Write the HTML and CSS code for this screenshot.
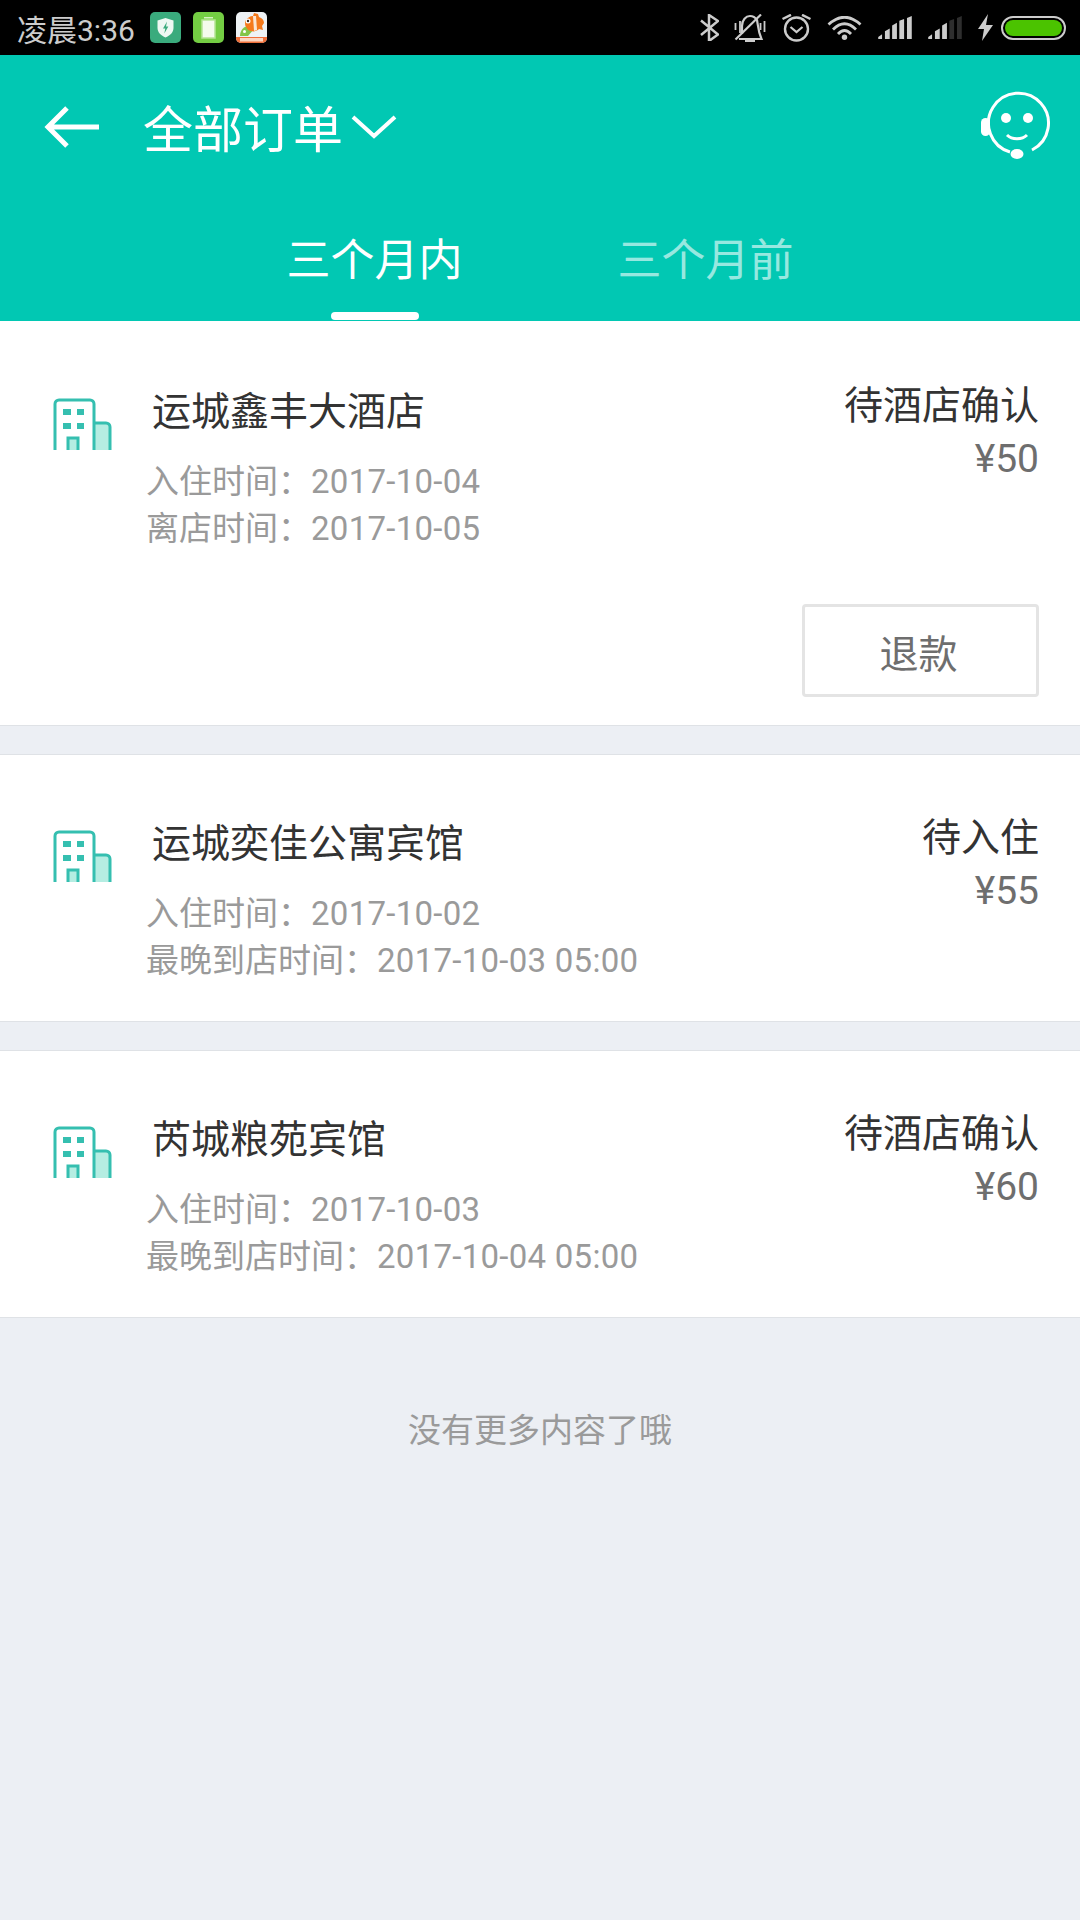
FILE: index.html
```html
<!DOCTYPE html>
<html lang="zh-CN">
<head>
    <meta charset="UTF-8">
    <meta name="viewport" content="width=device-width, initial-scale=1.0">
    <title>全部订单</title>
    <link rel="stylesheet" href="styles.css">
</head>
<body>

<div class="status-bar">
    <div class="status-left">
        <span class="status-time">凌晨3:36</span>
        <svg class="app-icon" viewBox="0 0 31 31">
            <rect width="31" height="31" rx="5" fill="#3aab7d"/>
            <path d="M15.500 6l8 2.500v7.500c0 4.500-3.500 7.500-8 9.500-4.500-2-8-5-8-9.500V8.500z" fill="#eef8f3"/>
            <path d="M17 9.500l-4 7h2.300l-1 5 4-7H16z" fill="#3aab7d"/>
        </svg>
        <svg class="app-icon" viewBox="0 0 31 31">
            <rect width="31" height="31" rx="5" fill="#74cd43"/>
            <rect x="11" y="5" width="9" height="1.500" fill="#d6f0c2"/>
            <rect x="9" y="8" width="13" height="18" fill="#f4fbec" stroke="#b5e595" stroke-width="1.500"/>
        </svg>
        <svg class="app-icon" viewBox="0 0 31 31">
            <rect width="31" height="31" rx="5" fill="#eef2f5"/>
            <path d="M4 24c0-6 4-10 9-10l5 3-6 7z" fill="#83c548"/>
            <circle cx="8.500" cy="19.500" r="1.500" fill="#fff"/>
            <path d="M9 9c2-3 5-5 8-5l1-3 4 1 1 3c3 1 5 3 5 6l-2 3 1 4-4-1c-2 2-5 3-8 2-2 0-4-2-5-4-1-1-1-4-1-6z" fill="#f57a1c"/>
            <path d="M17 4l3 0 1 14-3 1z" fill="#fbe6d3"/>
            <circle cx="12" cy="9" r="2.500" fill="#fff"/>
            <circle cx="12" cy="9" r="1.200" fill="#3a2a20"/>
            <path d="M0 25h31v1a5 5 0 0 1-5 5H5a5 5 0 0 1-5-5z" fill="#f0703a"/>
            <rect x="4" y="26" width="23" height="3.500" fill="#fbd6c2"/>
        </svg>
    </div>
    <div class="status-right">
        <svg class="ico-bt" viewBox="0 0 19 27">
            <path d="M1 6.500l17 14-9 6.500V1l9 6-17 14" fill="none" stroke="#ccc" stroke-width="2.500"/>
        </svg>
        <svg class="ico-bell" viewBox="0 0 32 28">
            <path d="M8 20v-8c0-6 4-10 8-10 3 0 5 1 7 4 1 5 1 11 4.500 19H5" fill="none" stroke="#ccc" stroke-width="2.200"/>
            <path d="M11 27h10" stroke="#ccc" stroke-width="2"/>
            <path d="M1.500 9v7M6 7v12M26.500 9v7M30.500 7v11" stroke="#ccc" stroke-width="1.800"/>
            <path d="M27 .5L1.500 25.500" stroke="#ccc" stroke-width="2.200"/>
        </svg>
        <svg class="ico-alarm" viewBox="0 0 29 28">
            <circle cx="14.500" cy="15" r="11.500" fill="none" stroke="#ccc" stroke-width="2.400"/>
            <path d="M8.500 13l6 5 6-5" fill="none" stroke="#ccc" stroke-width="2.200"/>
            <path d="M.5 5L9 .8M28.500 5L20 .8" stroke="#ccc" stroke-width="2.400"/>
        </svg>
        <svg class="ico-wifi" viewBox="0 0 35 24">
            <path d="M1.500 8.500Q17.500-6 33.500 8.500M6 13.500Q17.500 2 29 13.500M11 18Q17.500 11 24 18" fill="none" stroke="#ccc" stroke-width="2.800"/>
            <circle cx="17.500" cy="21.300" r="2.700" fill="#ccc"/>
        </svg>
        <svg class="ico-signal" viewBox="0 0 35 24">
            <path d="M0 24v-2l4-3v5zM7 24v-8l5-3v11zM14.500 24V10l5-3v17zM22 24V5l5-2v21zM30 24V2l5-2v24z" fill="#ccc"/>
        </svg>
        <svg class="ico-signal" viewBox="0 0 35 24">
            <path d="M0 24v-2l4-3v5zM7 24v-8l5-3v11zM14.500 24V10l5-3v17z" fill="#ccc"/>
            <path d="M22 24V5l5-2v21zM30 24V2l5-2v24z" fill="#2e2e2e"/>
        </svg>
        <svg class="ico-bolt" viewBox="0 0 15 27">
            <path d="M10 0L0 15h6L4 27l11-16H8z" fill="#ccc"/>
        </svg>
        <div class="battery"><div class="battery-fill"></div></div>
    </div>
</div>

<header class="top-bar">
    <div class="title-row">
        <svg class="back-icon" viewBox="0 0 58 44">
            <path d="M55 22H4M23 3L4 22l19 19" fill="none" stroke="#fff" stroke-width="5"/>
        </svg>
        <h1 class="page-title">全部订单</h1>
        <svg class="title-arrow" viewBox="0 0 46 26">
            <path d="M2 3l21 19L44 3" fill="none" stroke="#fff" stroke-width="4"/>
        </svg>
        <svg class="service-icon" viewBox="0 0 72 72">
            <path d="M52 62A30 30 0 1 0 30 64" fill="none" stroke="#fff" stroke-width="3"/>
            <rect x="1" y="30" width="9" height="18" rx="4.500" fill="#fff"/>
            <circle cx="26" cy="30" r="5" fill="#fff"/>
            <circle cx="48" cy="30" r="5" fill="#fff"/>
            <path d="M27 47c5 5 15 5 20 0" fill="none" stroke="#fff" stroke-width="3"/>
            <ellipse cx="37" cy="66" rx="6.500" ry="5" fill="#fff"/>
        </svg>
    </div>
    <div class="tabs">
        <div class="tab tab-active">三个月内</div>
        <div class="tab">三个月前</div>
    </div>
</header>

<main>
    <section class="order order-tall">
        <div class="order-main">
            <svg class="hotel-icon" viewBox="0 0 60 52">
                <path d="M41 25h12a4 4 0 0 1 4 4v23H41z" fill="#b5ede2"/>
                <path d="M2 52V6a4 4 0 0 1 4-4h31a4 4 0 0 1 4 4v46M41 25h12a4 4 0 0 1 4 4v23" fill="none" stroke="#35bfb0" stroke-width="3"/>
                <path d="M15 52V40h10v12" fill="#b5ede2" stroke="#35bfb0" stroke-width="3"/>
                <path d="M10 11h8v6h-8zM24 11h7v6h-7zM10 25h8v6h-8zM24 25h7v6h-7z" fill="#35bfb0"/>
            </svg>
            <div class="order-info">
                <div class="hotel-name">运城鑫丰大酒店</div>
                <div class="order-date">入住时间：<span class="date-value">2017-10-04</span></div>
                <div class="order-date">离店时间：<span class="date-value">2017-10-05</span></div>
            </div>
            <div class="order-side">
                <div class="order-status">待酒店确认</div>
                <div class="order-price">¥50</div>
            </div>
        </div>
        <div class="order-actions">
            <button class="refund-btn">退款</button>
        </div>
    </section>

    <section class="order">
        <div class="order-main">
            <svg class="hotel-icon" viewBox="0 0 60 52">
                <path d="M41 25h12a4 4 0 0 1 4 4v23H41z" fill="#b5ede2"/>
                <path d="M2 52V6a4 4 0 0 1 4-4h31a4 4 0 0 1 4 4v46M41 25h12a4 4 0 0 1 4 4v23" fill="none" stroke="#35bfb0" stroke-width="3"/>
                <path d="M15 52V40h10v12" fill="#b5ede2" stroke="#35bfb0" stroke-width="3"/>
                <path d="M10 11h8v6h-8zM24 11h7v6h-7zM10 25h8v6h-8zM24 25h7v6h-7z" fill="#35bfb0"/>
            </svg>
            <div class="order-info">
                <div class="hotel-name">运城奕佳公寓宾馆</div>
                <div class="order-date">入住时间：<span class="date-value">2017-10-02</span></div>
                <div class="order-date">最晚到店时间：<span class="date-value">2017-10-03 05:00</span></div>
            </div>
            <div class="order-side">
                <div class="order-status">待入住</div>
                <div class="order-price">¥55</div>
            </div>
        </div>
    </section>

    <section class="order">
        <div class="order-main">
            <svg class="hotel-icon" viewBox="0 0 60 52">
                <path d="M41 25h12a4 4 0 0 1 4 4v23H41z" fill="#b5ede2"/>
                <path d="M2 52V6a4 4 0 0 1 4-4h31a4 4 0 0 1 4 4v46M41 25h12a4 4 0 0 1 4 4v23" fill="none" stroke="#35bfb0" stroke-width="3"/>
                <path d="M15 52V40h10v12" fill="#b5ede2" stroke="#35bfb0" stroke-width="3"/>
                <path d="M10 11h8v6h-8zM24 11h7v6h-7zM10 25h8v6h-8zM24 25h7v6h-7z" fill="#35bfb0"/>
            </svg>
            <div class="order-info">
                <div class="hotel-name">芮城粮苑宾馆</div>
                <div class="order-date">入住时间：<span class="date-value">2017-10-03</span></div>
                <div class="order-date">最晚到店时间：<span class="date-value">2017-10-04 05:00</span></div>
            </div>
            <div class="order-side">
                <div class="order-status">待酒店确认</div>
                <div class="order-price">¥60</div>
            </div>
        </div>
    </section>

    <p class="no-more">没有更多内容了哦</p>
</main>

</body>
</html>
```

FILE: styles.css
```css
/* Order list page */
body {
    font-family: Roboto, "Noto Sans CJK SC", sans-serif;
    margin: 0;
    padding: 0;
    height: 1920px;
    overflow: hidden;
    background-color: #eceff4;
}

.status-bar {
    height: 55px;
    background-color: #000;
    display: flex;
    justify-content: space-between;
    align-items: center;
    padding: 0 14px 0 17px;
}

.status-left,
.status-right {
    display: flex;
    align-items: center;
}

.status-right {
    gap: 16px;
}

.status-time {
    font-size: 30px;
    color: #ccc;
    margin-right: 15px;
}

.app-icon {
    width: 31px;
    height: 31px;
    margin-right: 12px;
}

.ico-bt { width: 19px; height: 27px; margin-right: -1px; }
.ico-bell { width: 32px; height: 28px; }
.ico-alarm { width: 29px; height: 28px; }
.ico-wifi { width: 35px; height: 24px; }
.ico-signal { width: 34px; height: 23px; }
.ico-bolt { width: 15px; height: 27px; margin-right: -8px; }

.battery {
    width: 65px;
    height: 24px;
    border: 2px solid #ccc;
    border-radius: 12px;
    padding: 2px;
    box-sizing: border-box;
}

.battery-fill {
    height: 100%;
    background-color: #4bc300;
    border-radius: 8px;
}

.top-bar {
    height: 266px;
    background-color: #01c8b3;
    color: #fff;
}

.title-row {
    height: 144px;
    display: flex;
    align-items: center;
    padding: 0 28px 0 44px;
}

.back-icon {
    width: 58px;
    height: 44px;
    margin-right: 41px;
}

.page-title {
    margin: -3px 0 0;
    font-size: 50px;
    font-weight: 400;
}

.title-arrow {
    width: 46px;
    height: 26px;
    margin-left: 8px;
}

.service-icon {
    width: 72px;
    height: 72px;
    margin-left: auto;
    margin-top: -6px;
}

.tabs {
    display: flex;
    justify-content: center;
    gap: 99px;
    height: 122px;
}

.tab {
    position: relative;
    width: 232px;
    padding-top: 31px;
    font-size: 44px;
    line-height: 62px;
    text-align: center;
    color: rgba(255, 255, 255, 0.6);
}

.tab-active {
    color: #fff;
}

.tab-active::after {
    content: "";
    position: absolute;
    left: 72px;
    bottom: 1px;
    width: 88px;
    height: 8px;
    border-radius: 4px;
    background-color: #fff;
}

.order {
    background-color: #fff;
    border-top: 1px solid #dfe2e6;
    border-bottom: 1px solid #dfe2e6;
    height: 268px;
    box-sizing: border-box;
    margin-bottom: 28px;
}

.order-tall {
    height: 405px;
    border-top: none;
}

.order-tall .order-main {
    padding-top: 59px;
}

.order-main {
    display: flex;
    padding: 57px 41px 0 53px;
}

.hotel-icon {
    width: 60px;
    height: 52px;
    margin-top: 18px;
    flex-shrink: 0;
}

.order-info {
    flex: 1;
    margin-left: 34px;
    margin-top: 4px;
}

.hotel-name {
    font-size: 39px;
    line-height: 56px;
    color: #333;
    margin-left: 5px;
    margin-bottom: 18px;
}

.order-date {
    font-size: 33px;
    line-height: 47px;
    color: #9a9a9a;
    margin-left: -1px;
}

.date-value {
    letter-spacing: 0.27px;
}

.order-side {
    text-align: right;
    margin-top: -1px;
}

.order-status {
    font-size: 39px;
    line-height: 54px;
    color: #333;
}

.order-price {
    font-size: 39px;
    line-height: 53px;
    color: #6e6e6e;
}

.order-actions {
    display: flex;
    justify-content: flex-end;
    padding: 52px 41px 0 0;
}

.refund-btn {
    width: 237px;
    height: 93px;
    border: 3px solid #e4e4e4;
    border-radius: 4px;
    background-color: #fff;
    font-family: inherit;
    font-size: 39px;
    color: #6e6e6e;
    padding: 0 4px 0 0;
}

.no-more {
    margin: 0;
    padding-top: 55px;
    text-align: center;
    font-size: 33px;
    line-height: 60px;
    color: #9a9a9a;
}
```
